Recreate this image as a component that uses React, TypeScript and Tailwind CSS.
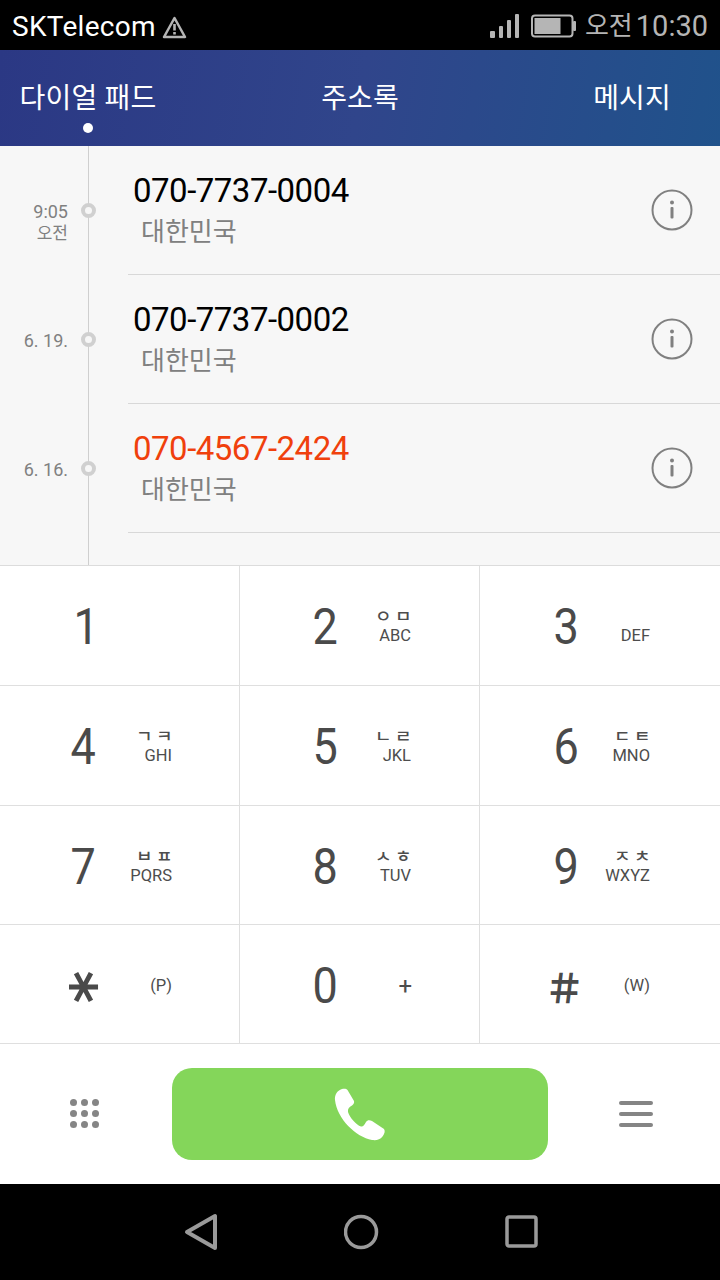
const calls = [
  { n: "070-7737-0004", red: false, t: ["9:05", "오전"] },
  { n: "070-7737-0002", red: false, t: ["6. 19."] },
  { n: "070-4567-2424", red: true, t: ["6. 16."] },
];

const rows: { d: string; j: string; l: string; h: string }[][] = [
  [
    { d: "1", j: "", l: "", h: "h-[120px]" },
    { d: "2", j: "ㅇㅁ", l: "ABC", h: "h-[120px]" },
    { d: "3", j: " ", l: "DEF", h: "h-[120px]" },
  ],
  [
    { d: "4", j: "ㄱㅋ", l: "GHI", h: "h-[120px]" },
    { d: "5", j: "ㄴㄹ", l: "JKL", h: "h-[120px]" },
    { d: "6", j: "ㄷㅌ", l: "MNO", h: "h-[120px]" },
  ],
  [
    { d: "7", j: "ㅂㅍ", l: "PQRS", h: "h-[119px]" },
    { d: "8", j: "ㅅㅎ", l: "TUV", h: "h-[119px]" },
    { d: "9", j: "ㅈㅊ", l: "WXYZ", h: "h-[119px]" },
  ],
  [
    { d: "*", j: "", l: "(P)", h: "h-[119px]" },
    { d: "0", j: "", l: "+", h: "h-[119px]" },
    { d: "#", j: "", l: "(W)", h: "h-[119px]" },
  ],
];

function Info() {
  return (
    <svg width="42" height="42" viewBox="0 0 42 42" fill="none">
      <circle cx="21" cy="21" r="19.5" stroke="#808080" strokeWidth="2" />
      <circle cx="21" cy="13.5" r="2" fill="#808080" />
      <rect x="19.5" y="18" width="3" height="11.5" rx="1" fill="#808080" />
    </svg>
  );
}

function Key({ k, col }: { k: { d: string; j: string; l: string; h: string }; col: number }) {
  const isStar = k.d === "*";
  const isHash = k.d === "#";
  const shiftDigit = k.d === "4" || k.d === "7";
  return (
    <div className={`flex items-center pl-[55px] border-b border-[#dfdfdf] ${k.h} ${col === 2 ? "" : "border-r"}`}>
      <div className={`w-[60px] h-[60px] flex items-center justify-center text-[#4a4a4a] pt-[3px] ${col === 2 ? "pl-[3px]" : ""}`}>
        {isStar ? (
          <span className="font-['DejaVu_Sans',sans-serif] font-bold text-[62px] leading-none rotate-90 translate-x-[-12px] translate-y-[1px]">*</span>
        ) : isHash ? (
          <span className="font-['Noto_Sans_CJK_KR',sans-serif] text-[40px] leading-none font-bold -translate-x-[2px]">＃</span>
        ) : (
          <span className={`text-[50px] leading-none scale-x-90 ${shiftDigit ? "-translate-x-[2px]" : ""} ${k.d === "1" ? "translate-x-px" : ""}`}>{k.d}</span>
        )}
      </div>
      <div className={`w-[57px] flex flex-col items-end text-[#4d4d4d] ${col === 0 ? "" : col === 1 ? "-translate-x-px" : "-translate-x-[2px]"} ${isStar || isHash || k.d === "0" ? "translate-y-[2px]" : ""}`}>
        {k.j && (
          <span className="text-[18px] leading-[17px] h-[17px] font-medium tracking-[3.5px] mr-[-4px] scale-y-90 mt-[3px] mb-[1px] whitespace-pre">
            {k.j}
          </span>
        )}
        <span className={`leading-[20px] ${k.l === "+" ? "text-[24px] mr-[-1px]" : "text-[16.5px]"}`}>{k.l}</span>
      </div>
    </div>
  );
}

export default function App() {
  return (
    <div className="w-[720px] h-[1280px] flex flex-col bg-white overflow-hidden font-['Roboto','Noto_Sans_CJK_KR',sans-serif]">
      {/* status bar */}
      <div className="h-[50px] bg-black flex items-center pl-3 pr-3 shrink-0">
        <span className="text-[28px] leading-none text-white tracking-[0.3px] pt-[3px]">SKTelecom</span>
        <svg className="ml-[6px] mt-[3px]" width="25" height="24" viewBox="0 0 25 24" fill="none">
          <path d="M12.5 3 L23 22 H2 Z" stroke="#b5b5b5" strokeWidth="2.5" strokeLinejoin="round" />
          <rect x="11.2" y="9" width="2.6" height="6.5" fill="#b5b5b5" />
          <rect x="11.2" y="17" width="2.6" height="2.5" fill="#b5b5b5" />
        </svg>
        <div className="ml-auto flex items-center pt-[2px]">
          <svg width="30" height="26" viewBox="0 0 30 26" fill="#b5b5b5">
            <rect x="0" y="18" width="5" height="7" rx="1" />
            <rect x="9" y="13" width="4" height="12" rx="1" />
            <rect x="17" y="7" width="4" height="18" rx="1" />
            <rect x="25" y="1" width="4" height="24" rx="1" />
          </svg>
          <svg className="ml-[11px]" width="45" height="24" viewBox="0 0 45 24" fill="none">
            <rect x="1" y="1.5" width="40.5" height="21" rx="3" stroke="#b5b5b5" strokeWidth="2" />
            <rect x="3.5" y="4" width="26" height="16" fill="#b5b5b5" />
            <rect x="42" y="7" width="3" height="10" rx="1" fill="#b5b5b5" />
          </svg>
          <span className="ml-[9px] text-[26px] leading-none text-[#b5b5b5]">오전</span>
          <span className="ml-[3px] text-[29px] leading-none text-[#b5b5b5]">10:30</span>
        </div>
      </div>

      {/* tabs */}
      <div className="h-[96px] shrink-0 grid grid-cols-[176px_1fr_176px] bg-linear-[100deg] from-[#2b3884] via-[#30458b] to-[#20528b] text-white text-[28px]">
        <div className="relative flex items-center justify-center pt-[2px]">
          <span className="tracking-[0.2px]">다이얼 패드</span>
          <span className="absolute left-[83px] top-[73px] w-[10px] h-[10px] rounded-full bg-white" />
        </div>
        <div className="flex items-center justify-center pt-[2px]">주소록</div>
        <div className="flex items-center justify-center pt-[2px]">메시지</div>
      </div>

      {/* list */}
      <div className="relative h-[420px] shrink-0 bg-[#f7f7f7] border-b border-[#dcdcdc]">
        <div className="absolute left-[88px] top-0 bottom-0 w-px bg-[#cfcfcf]" />
        {calls.map((c) => (
          <div key={c.n} className="relative h-[129px] flex">
            <div className="w-[68px] pt-[55px] shrink-0 flex flex-col items-end text-[#808080]">
              <span className="text-[18px] leading-[21px]">{c.t[0]}</span>
              {c.t[1] && <span className="text-[17px] leading-[22px]">{c.t[1]}</span>}
            </div>
            <span className="absolute left-[81px] top-[57px] w-[15px] h-[15px] rounded-full border-[4px] border-[#d0d0d0] bg-[#f7f7f7]" />
            <div className="ml-[60px] flex-1 border-b border-[#d8d8d8] flex items-start justify-between pl-[5px] pr-[27px]">
              <div className="flex flex-col pt-[25px]">
                <span className={`text-[33px] leading-[40px] tracking-[-0.5px] ${c.red ? "text-[#f0400c]" : "text-black"}`}>{c.n}</span>
                <span className="text-[26px] leading-[40px] text-[#808080] ml-[8px] pt-[1px]">대한민국</span>
              </div>
              <div className="mt-[43px]">
                <Info />
              </div>
            </div>
          </div>
        ))}
      </div>

      {/* keypad */}
      <div className="shrink-0 flex flex-col">
        {rows.map((r, i) => (
          <div key={i} className="grid grid-cols-3">
            {r.map((k, j) => (
              <Key key={k.d} k={k} col={j} />
            ))}
          </div>
        ))}
      </div>

      {/* actions */}
      <div className="flex-1 flex items-center justify-between pl-[70px] pr-[67px]">
        <div className="grid grid-cols-3 gap-x-[4px] gap-y-[4px] -mt-px">
          {Array.from({ length: 9 }).map((_, i) => (
            <span key={i} className="w-[7px] h-[7px] rounded-full bg-[#858585]" />
          ))}
        </div>
        <div className="w-[376px] h-[92px] rounded-[20px] bg-[#84d65a] flex items-center justify-center ml-px mr-[-1px]">
          <svg width="52" height="54" viewBox="0 0 52 54" fill="#fff">
            <path d="M8 2 C10 1.5 12.5 1.5 13.5 3 L20 14 C20.5 16 19.5 17 18 18.5 C15 20 13.5 22 14 25 C15.5 30 22 38 27 39.5 C29 40 30.5 38 32 35 C33.5 32.5 36 33 38 34 L50 42 C51.5 44 50.5 47 48.5 49.5 C46 53 42 53.5 38 53 C22 50 3 32 1 13 C0.5 8 3 3.5 8 2 Z" />
          </svg>
        </div>
        <div className="flex flex-col gap-[7px]">
          <span className="w-[34px] h-[4px] rounded-full bg-[#858585]" />
          <span className="w-[34px] h-[4px] rounded-full bg-[#858585]" />
          <span className="w-[34px] h-[4px] rounded-full bg-[#858585]" />
        </div>
      </div>

      {/* nav */}
      <div className="h-[96px] shrink-0 bg-black flex items-center pl-[183px]">
        <svg width="36" height="38" viewBox="0 0 36 38" fill="none">
          <path d="M32 3 V35 L4 19 Z" stroke="#9a9a9a" strokeWidth="4" strokeLinejoin="round" />
        </svg>
        <svg className="ml-[125px]" width="36" height="36" viewBox="0 0 36 36" fill="none">
          <circle cx="17" cy="18" r="15.5" stroke="#9a9a9a" strokeWidth="3.5" />
        </svg>
        <svg className="ml-[125px]" width="34" height="34" viewBox="0 0 34 34" fill="none">
          <rect x="2" y="2" width="29" height="29" rx="2" stroke="#9a9a9a" strokeWidth="3.5" />
        </svg>
      </div>
    </div>
  );
}
